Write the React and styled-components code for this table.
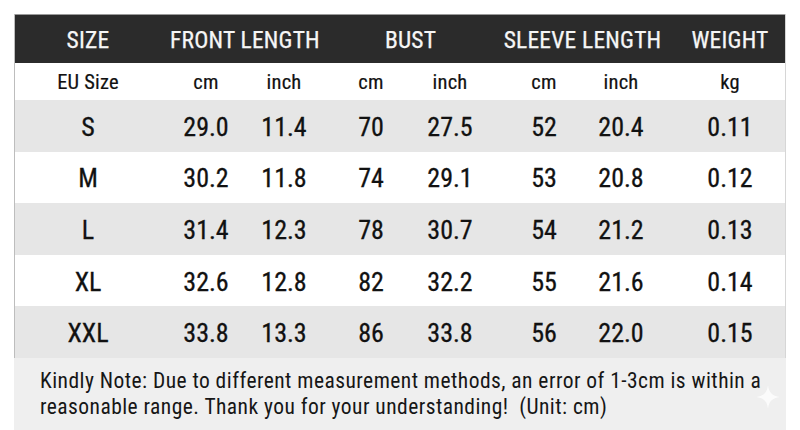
import React from "react";
import styled, { createGlobalStyle } from "styled-components";

const Global = createGlobalStyle`
  html, body { margin: 0; padding: 0; background: #ffffff; }
  body { width: 800px; height: 430px; overflow: hidden; }
`;

const Page = styled.div`
  position: relative;
  width: 800px;
  height: 430px;
  padding: 14px 14px 0 14px;
  box-sizing: border-box;
  font-family: "Roboto Condensed", "DejaVu Sans Condensed", sans-serif;
  color: #111111;
  display: flex;
  flex-direction: column;
`;

const Table = styled.div`
  display: grid;
  grid-template-columns: 33px 80px 42px 72px 6px 72px 15px 72px 7px 72px 22px 72px 5px 72px 37px 72px 1fr;
  grid-template-rows: 49px 37px repeat(5, 51.6px);
  border-left: 1px solid #bdbdbd;
  border-right: 1px solid #d6d6d6;
`;

const Band = styled.div`
  grid-column: 1 / -1;
  grid-row: ${(p) => p.$row};
  background: ${(p) => p.$bg};
  border-top: ${(p) => (p.$top ? "1px solid #9a9a9a" : "none")};
`;

const Cell = styled.div`
  grid-row: ${(p) => p.$row};
  grid-column: ${(p) => p.$col};
  display: flex;
  align-items: center;
  justify-content: center;
  white-space: nowrap;
  z-index: 1;
`;

const HeadCell = styled(Cell)`
  color: #f6f6f6;
  font-size: 23.5px;
  font-weight: 400;
  letter-spacing: 0.2px;
  padding-top: 2px;
  -webkit-text-stroke: 0.25px #f6f6f6;
`;

const UnitCell = styled(Cell)`
  font-size: 20.5px;
  font-weight: 400;
  letter-spacing: 0.2px;
  -webkit-text-stroke: 0.2px #111111;
`;

const DataCell = styled(Cell)`
  font-size: 26px;
  font-weight: 400;
  letter-spacing: 0px;
  padding-top: 2px;
  -webkit-text-stroke: 0.3px #111111;
`;

const Note = styled.div`
  flex: 1;
  background: #efefef;
  padding: 10px 0 0 26px;
  font-size: 21.5px;
  font-weight: 400;
  line-height: 26px;
  color: #161616;
  letter-spacing: 0.45px;
  white-space: nowrap;
`;

const Sparkle = styled.svg`
  position: absolute;
  right: 19px;
  bottom: 20px;
  width: 26px;
  height: 26px;
  opacity: 0.75;
`;

const COLS = [2, 4, 6, 8, 10, 12, 14, 16];
const HEAD = [
  { t: "SIZE", c: "2" },
  { t: "FRONT LENGTH", c: "4 / 7" },
  { t: "BUST", c: "8 / 11" },
  { t: "SLEEVE LENGTH", c: "12 / 15" },
  { t: "WEIGHT", c: "16" },
];
const UNITS = ["EU Size", "cm", "inch", "cm", "inch", "cm", "inch", "kg"];
const ROWS = [
  ["S", "29.0", "11.4", "70", "27.5", "52", "20.4", "0.11"],
  ["M", "30.2", "11.8", "74", "29.1", "53", "20.8", "0.12"],
  ["L", "31.4", "12.3", "78", "30.7", "54", "21.2", "0.13"],
  ["XL", "32.6", "12.8", "82", "32.2", "55", "21.6", "0.14"],
  ["XXL", "33.8", "13.3", "86", "33.8", "56", "22.0", "0.15"],
];

export default function App() {
  return (
    <Page>
      <Global />
      <Table>
        <Band $row={1} $bg="#2b2b2b" $top />
        <Band $row={2} $bg="#ffffff" />
        {ROWS.map((_, i) => (
          <Band key={i} $row={i + 3} $bg={i % 2 === 0 ? "#e6e6e6" : "#ffffff"} />
        ))}
        {HEAD.map((h) => (
          <HeadCell key={h.t} $row={1} $col={h.c}>
            {h.t}
          </HeadCell>
        ))}
        {UNITS.map((u, i) => (
          <UnitCell key={i} $row={2} $col={COLS[i]}>
            {u}
          </UnitCell>
        ))}
        {ROWS.map((r, ri) =>
          r.map((v, ci) => (
            <DataCell key={ri + "-" + ci} $row={ri + 3} $col={COLS[ci]}>
              {v}
            </DataCell>
          ))
        )}
      </Table>
      <Note>
        Kindly Note: Due to different measurement methods, an error of 1-3cm is within a
        <br />
        reasonable range. Thank you for your understanding!&nbsp; (Unit: cm)
      </Note>
      <Sparkle viewBox="0 0 24 24">
        <path d="M12 1 C12.8 8 16 11.2 23 12 C16 12.8 12.8 16 12 23 C11.2 16 8 12.8 1 12 C8 11.2 11.2 8 12 1 Z" fill="#ffffff" />
      </Sparkle>
    </Page>
  );
}
